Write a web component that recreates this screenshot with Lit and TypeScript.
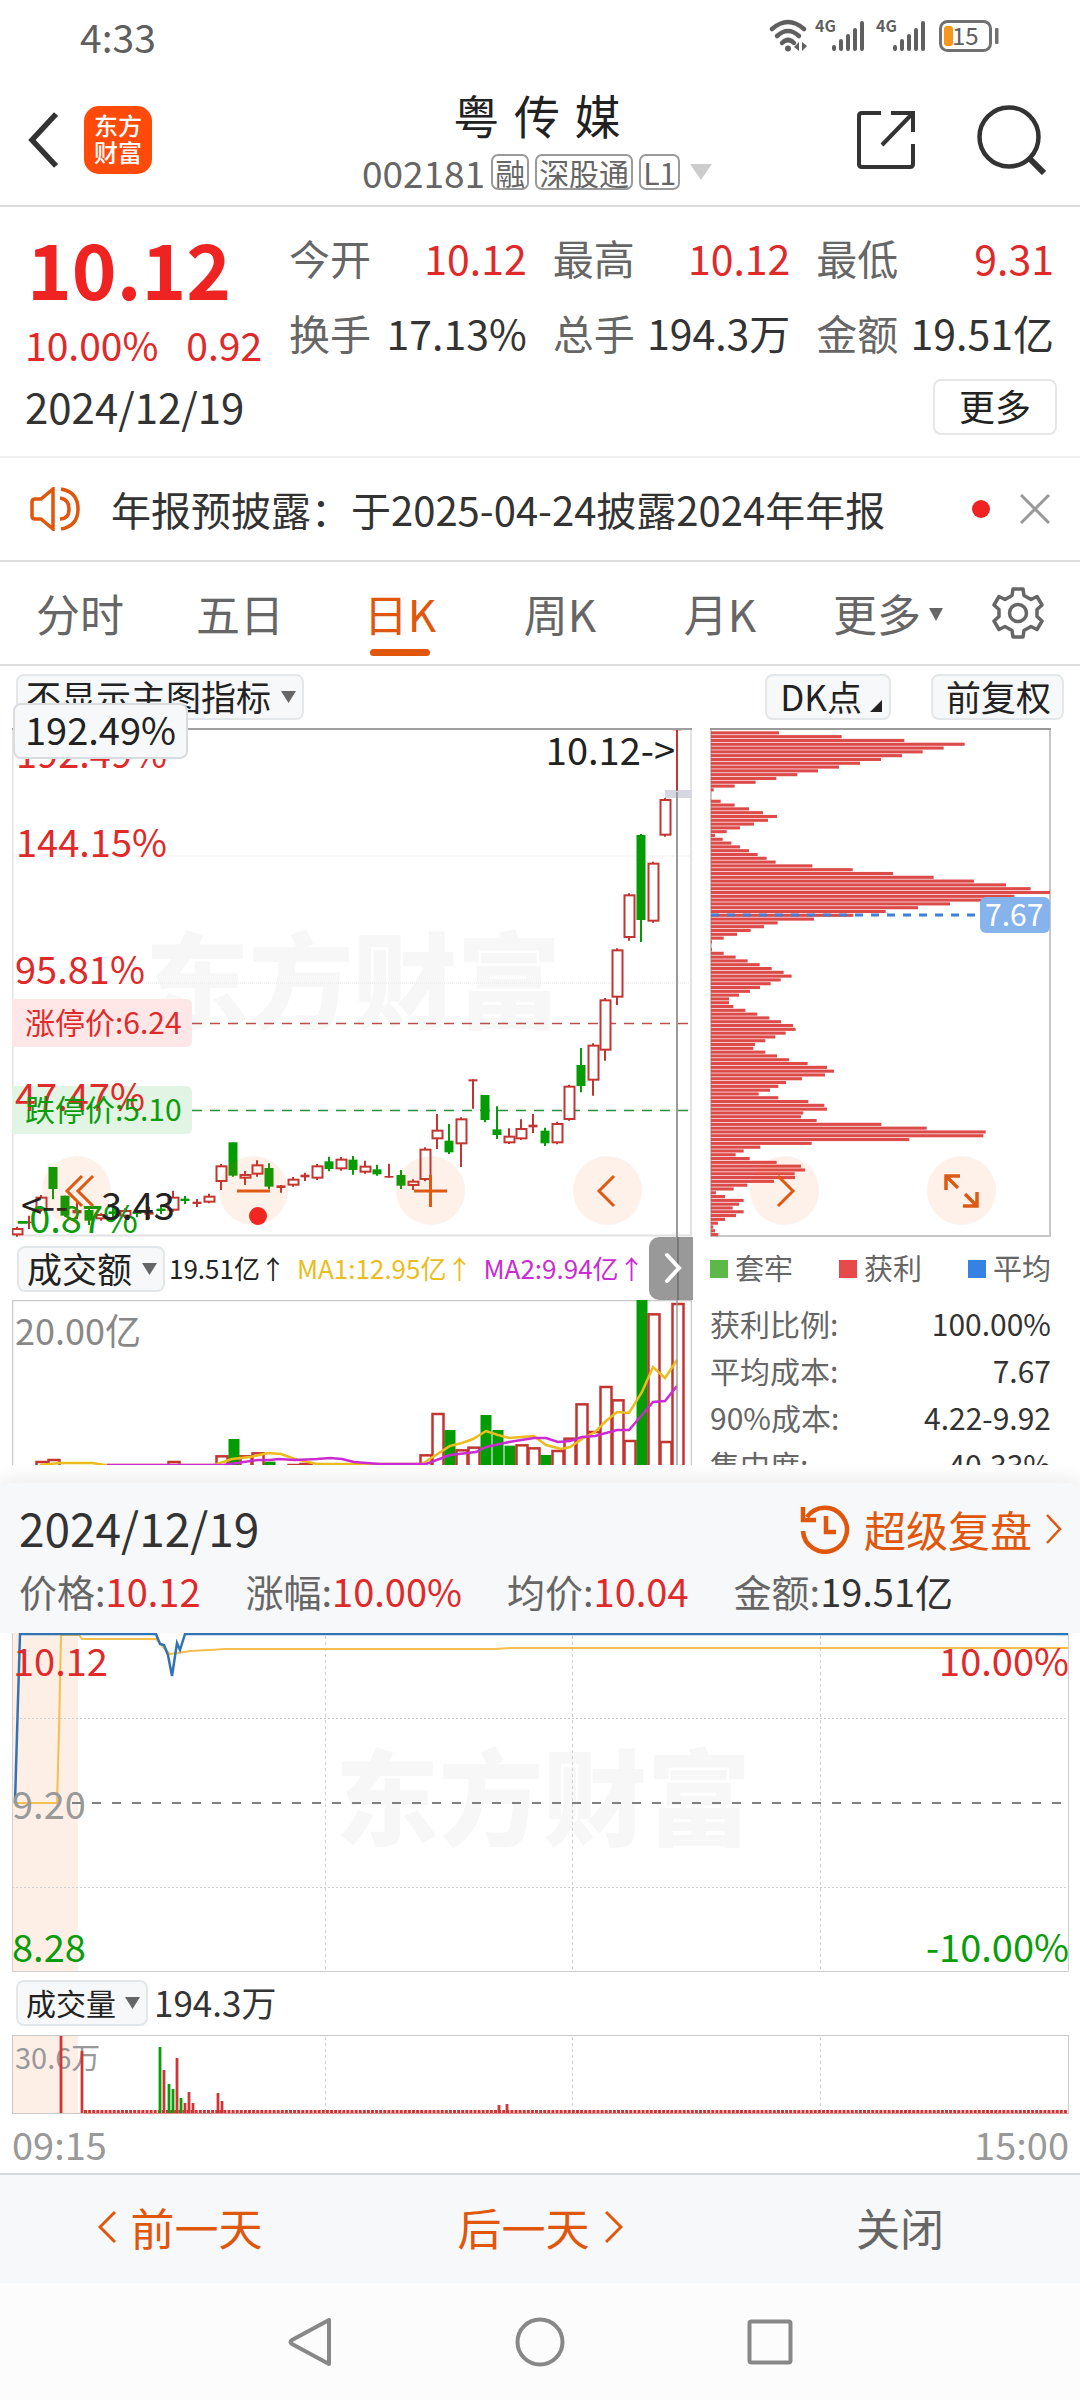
import { LitElement, html, svg, css } from "lit";
import { customElement, property, state } from "lit/decorators.js";
import { classMap } from "lit/directives/class-map.js";

const FONT = css`"Noto Sans CJK SC", "Noto Sans", sans-serif`;

/* ---------- chart data ---------- */

const RED = "#c23531";
const GREEN = "#049c04";

/** colour, high, body top, body bottom, low; thirds of a pixel below CHART_TOP */
type Candle = ["r" | "g", number, number, number, number];
const CHART_TOP = 720;
const STEP = 12;
const FIRST_X = 17;

const CANDLES: Candle[] = [
  ["r", 1520, 1524, 1546, 1550], ["r", 1487, 1505, 1509, 1527], ["r", 1425, 1430, 1472, 1475],
  ["g", 1341, 1341, 1407, 1438], ["g", 1427, 1427, 1487, 1490], ["r", 1445, 1470, 1480, 1498],
  ["g", 1465, 1470, 1502, 1515], ["r", 1480, 1482, 1498, 1502], ["g", 1450, 1474, 1482, 1500],
  ["r", 1465, 1470, 1490, 1495], ["g", 1466, 1475, 1482, 1492], ["r", 1460, 1476, 1484, 1498],
  ["g", 1455, 1466, 1473, 1482], ["r", 1412, 1430, 1472, 1475], ["g", 1428, 1436, 1443, 1452],
  ["r", 1437, 1445, 1452, 1461], ["r", 1421, 1427, 1448, 1450], ["r", 1332, 1336, 1386, 1410],
  ["g", 1267, 1267, 1367, 1370], ["r", 1353, 1362, 1376, 1395], ["r", 1321, 1333, 1364, 1370],
  ["g", 1330, 1344, 1400, 1408], ["r", 1395, 1396, 1404, 1418], ["r", 1371, 1376, 1397, 1400],
  ["r", 1358, 1364, 1372, 1383], ["r", 1332, 1336, 1376, 1380], ["g", 1310, 1324, 1347, 1354],
  ["r", 1311, 1316, 1348, 1352], ["g", 1308, 1319, 1350, 1364], ["r", 1322, 1337, 1358, 1361],
  ["g", 1334, 1348, 1363, 1367], ["r", 1331, 1368, 1373, 1373], ["g", 1350, 1365, 1397, 1407],
  ["r", 1378, 1382, 1398, 1410], ["r", 1282, 1286, 1380, 1384], ["r", 1182, 1229, 1258, 1287],
  ["g", 1212, 1262, 1297, 1302], ["r", 1192, 1195, 1273, 1341], ["r", 1078, 1078, 1084, 1166],
  ["g", 1125, 1125, 1200, 1207], ["g", 1159, 1228, 1245, 1257], ["r", 1225, 1247, 1270, 1272],
  ["r", 1198, 1224, 1258, 1260], ["r", 1182, 1214, 1222, 1239], ["g", 1223, 1232, 1270, 1278],
  ["r", 1205, 1209, 1270, 1273], ["r", 1094, 1097, 1200, 1202], ["g", 984, 1035, 1098, 1117],
  ["r", 970, 974, 1082, 1127], ["r", 834, 838, 992, 1022], ["r", 685, 688, 833, 855],
  ["r", 520, 523, 654, 662], ["g", 342, 345, 600, 666], ["r", 425, 428, 605, 608],
  ["r", 234, 237, 347, 350], ["r", 26, 26, 31, 212],
];

/** right edges of the cost distribution bars, top price first */
const CHIPS = [
  267, 455, 643, 824, 761, 698, 636, 573, 510, 447, 384, 322, 259, 197, 134, 71, 0, 0,
  92, 134, 177, 219, 261, 234, 192, 150, 110, 75, 98, 124, 150, 177, 203, 230, 257,
  367, 488, 609, 731, 852, 948, 1022, 1080, 973, 900, 780, 684, 587, 490, 372, 263, 222,
  182, 141, 101, 66, 0, 66, 101, 137, 173, 209, 245, 281, 305, 272, 242, 210, 180, 147,
  117, 117, 130, 166, 202, 238, 273, 309, 317, 287, 256, 226, 195, 190, 226, 261, 297,
  353, 411, 432, 405, 336, 288, 265, 240, 206, 265, 355, 403, 411, 340, 333, 380, 574,
  710, 887, 880, 658, 365, 211, 161, 137, 179, 260, 333, 345, 314, 315, 252, 172, 131,
  78, 105, 161, 147, 128, 161, 138, 105, 84, 70, 75, 85,
];

/** day index, colour, bar top in thirds of a pixel */
const VOLUMES: [number, "r" | "g", number][] = [
  [2, "r", 693], [3, "r", 687], [13, "r", 693], [17, "r", 676], [18, "g", 627], [19, "r", 676],
  [20, "r", 667], [21, "g", 695], [23, "r", 702], [24, "r", 699], [34, "r", 673], [35, "r", 549],
  [36, "g", 600], [37, "r", 658], [38, "r", 650], [39, "g", 555], [40, "g", 600], [41, "g", 647],
  [42, "r", 643], [43, "r", 652], [44, "g", 675], [45, "r", 660], [46, "r", 623], [47, "r", 520],
  [48, "r", 603], [49, "r", 468], [50, "r", 508], [51, "r", 630], [52, "g", 210], [53, "r", 250],
  [54, "r", 633], [55, "r", 219],
];

const MA1 = "40,1465 60,1463 92,1463 105,1465 180,1465 214,1465 232,1459 250,1457 268,1453 281,1454 295,1459 317,1464 348,1464 375,1464 422,1464 450,1446 462,1443 473,1439 486,1431 498,1435 509,1438 534,1436 546,1445 561,1449 570,1447 582,1439 595,1432 606,1421 617,1412 629,1413 642,1392 653,1367 665,1378 677,1360";
const MA2 = "107,1465 163,1465 223,1465 258,1460 270,1460 279,1459 295,1460 317,1459 330,1458 342,1459 354,1462 380,1464 426,1464 450,1455 476,1452 486,1447 509,1442 534,1438 546,1438 558,1442 570,1441 582,1437 595,1436 617,1430 629,1430 642,1415 653,1402 665,1401 677,1386";

const MINUTE_BARS: [number, "r" | "g", number][] = [
  [61, "r", 2036], [82, "r", 2051], [160, "g", 2047], [164, "r", 2070], [169, "g", 2084],
  [173, "g", 2089], [177, "r", 2058], [181, "g", 2098], [185, "r", 2103], [189, "r", 2092],
  [193, "r", 2103], [218, "r", 2093], [222, "r", 2101], [499, "r", 2105], [507, "r", 2104],
];

/* ---------- small pieces ---------- */

@customElement("pick-list")
class PickList extends LitElement {
  @property() label = "";
  @property({ type: Array }) options: string[] = [];

  static styles = css`
    :host {
      display: inline-grid;
      align-items: center;
      font-size: inherit;
    }
    .box {
      grid-area: 1 / 1;
      appearance: none;
      box-sizing: border-box;
      height: 46px;
      margin: 0;
      padding: 0 30px 2px 8px;
      border: 2px solid #e4e7ea;
      border-radius: 8px;
      background: #f7f8fa;
      color: #222;
      font-family: ${FONT};
      font-size: inherit;
      line-height: 40px;
    }
    .arrow {
      grid-area: 1 / 1;
      justify-self: end;
      margin-right: 8px;
      pointer-events: none;
    }
  `;

  render() {
    return html`
      <select class="box" aria-label=${this.label}>
        ${this.options.map((o) => html`<option>${o}</option>`)}
      </select>
      <svg class="arrow" width="15" height="14" viewBox="0 0 15 14" aria-hidden="true">
        <path d="M0 1H15L7.500 13Z" fill="#666" />
      </svg>
    `;
  }
}

@customElement("status-bar")
class StatusBar extends LitElement {
  static styles = css`
    :host {
      display: flex;
      justify-content: space-between;
      align-items: center;
      height: 75px;
      padding: 0 80px;
      color: #5f5f5f;
      font-family: ${FONT};
      font-size: 39px;
      line-height: 40px;
    }
    .time {
      padding-bottom: 4px;
    }
  `;

  private signal(x: number) {
    return svg`
      <text x=${x} y="24" font-size="16" font-weight="700" fill="#5f5f5f">4G</text>
      ${[0, 1, 2, 3, 4].map((i) => {
        const h = [6, 12, 17, 23, 30][i];
        return svg`<rect x=${x + 17 + i * 7} y=${43 - h} width="4" height=${h} rx="2" fill="#5f5f5f" />`;
      })}
    `;
  }

  render() {
    return html`
      <span class="time">4:33</span>
      <svg width="232" height="50" viewBox="768 8 232 50" role="img" aria-label="网络与电量">
        <g transform="translate(0 3)">
          <g fill="none" stroke="#5f5f5f" stroke-width="4.500" stroke-linecap="round">
            <path d="M772 21Q788 7 804 21" />
            <path d="M777 28Q788 18 799 28" />
            <path d="M782 35Q788 29 794 35" />
          </g>
          <circle cx="788" cy="40.500" r="3" fill="#5f5f5f" />
          <path d="M799 34v9l-5-4zM802 43v-9l5 4z" fill="#5f5f5f" />
          ${this.signal(815)} ${this.signal(876)}
          <rect x="940.500" y="13.500" width="50" height="29" rx="7" fill="none" stroke="#707070" stroke-width="3" />
          <rect x="995" y="20" width="3.500" height="16" rx="1" fill="#707070" />
          <rect x="944" y="18" width="9" height="20" rx="3" fill="#f7971d" />
          <text x="952" y="37" font-size="24" fill="#5f5f5f">15</text>
        </g>
      </svg>
    `;
  }
}

/* ---------- page ---------- */

@customElement("app-root")
class AppRoot extends LitElement {
  @state() private tab = "日K";

  static styles = css`
    :host {
      display: block;
      min-height: 100vh;
      background: #fff;
      color: #333;
      font-family: ${FONT};
      font-size: 40px;
    }
    * {
      box-sizing: border-box;
    }
    button,
    a {
      margin: 0;
      padding: 0;
      border: 0;
      background: none;
      color: inherit;
      font: inherit;
      text-decoration: none;
    }
    svg {
      display: block;
    }
    dl,
    dd,
    dt,
    h1,
    p {
      margin: 0;
      font-weight: 400;
    }
    .red {
      color: #e02a2a;
    }

    .header {
      display: grid;
      grid-template-columns: 1fr auto 1fr;
      align-items: center;
      height: 132px;
      padding: 0 34px 0 28px;
      border-bottom: 2px solid #dcdcdc;
    }
    .side {
      display: flex;
      align-items: center;
      gap: 26px;
    }
    .side.end {
      justify-content: flex-end;
      gap: 60px;
    }
    .logo {
      display: grid;
      place-content: center;
      width: 68px;
      height: 68px;
      padding-bottom: 4px;
      border-radius: 15px;
      background: #ff4a0a;
      color: #fff;
      font-size: 24px;
      font-weight: 500;
      line-height: 27px;
    }
    .title {
      display: flex;
      flex-direction: column;
      align-items: center;
      gap: 4px;
      padding-top: 4px;
    }
    .name {
      color: #222;
      font-family: "DejaVu Sans", "Noto Sans CJK SC", sans-serif;
      font-size: 46px;
      line-height: 56px;
    }
    .code {
      display: flex;
      align-items: center;
      gap: 6px;
      color: #666;
      font-size: 37px;
      line-height: 44px;
    }
    .badge {
      padding: 0 2px;
      border: 2px solid #9a9a9a;
      border-radius: 7px;
      font-size: 30px;
      line-height: 32px;
    }
    .more-arrow {
      margin-left: 4px;
    }

    .quote {
      display: grid;
      grid-template-columns: 264px 1fr;
      padding: 13px 26px 12px 25px;
      border-bottom: 2px solid #efefef;
    }
    .price {
      color: #f02323;
      font-size: 76px;
      font-weight: 700;
      line-height: 94px;
      padding: 0 0 4px 2px;
    }
    .change {
      display: flex;
      gap: 28px;
      font-size: 39px;
      line-height: 52px;
    }
    .stats {
      display: grid;
      grid-template-columns: repeat(3, 1fr);
      column-gap: 26px;
      font-size: 41px;
      line-height: 75px;
    }
    .stat {
      display: flex;
      justify-content: space-between;
      white-space: nowrap;
    }
    .stat dt,
    .grey {
      color: #666;
    }
    .date-row {
      grid-column: 1 / -1;
      display: flex;
      justify-content: space-between;
      align-items: center;
      height: 74px;
      font-size: 42px;
      line-height: 50px;
    }
    .date-row time {
      padding-bottom: 2px;
    }
    .more {
      margin-right: -3px;
      padding: 0 24px 4px;
      border: 2px solid #e6e6e6;
      border-radius: 8px;
      color: #222;
      font-size: 36px;
      line-height: 48px;
    }

    .notice {
      display: flex;
      align-items: center;
      height: 104px;
      padding: 0 30px;
      border-bottom: 2px solid #dcdcdc;
      font-size: 40px;
      line-height: 50px;
    }
    .notice p {
      flex: 1;
      margin-left: 31px;
      white-space: nowrap;
    }
    .dot {
      width: 18px;
      height: 18px;
      margin-right: 30px;
      border-radius: 50%;
      background: #f02323;
    }

    .tabs {
      display: grid;
      grid-template-columns: repeat(5, 160fr) 176fr 84fr;
      height: 104px;
      padding-right: 20px;
      border-bottom: 2px solid #dcdcdc;
      color: #666;
      font-size: 44px;
      line-height: 52px;
    }
    .tab {
      display: flex;
      flex-direction: column;
      align-items: center;
      padding-top: 25px;
    }
    .tab.wide {
      flex-direction: row;
      align-items: flex-start;
      justify-content: center;
      gap: 8px;
    }
    .tab.wide svg {
      margin-top: 21px;
    }
    .tab.on {
      color: #e0560b;
    }
    .tab.on::after {
      content: "";
      width: 60px;
      height: 7px;
      margin-top: 10px;
      border-radius: 4px;
      background: #e0560b;
    }
    .gear {
      display: grid;
      place-content: center;
    }

    .tools {
      display: flex;
      align-items: flex-start;
      gap: 40px;
      height: 62px;
      padding: 8px 16px 0;
      font-size: 35px;
      line-height: 40px;
    }
    .tools pick-list {
      margin-right: auto;
    }
    .tool {
      display: flex;
      align-items: center;
      height: 46px;
      padding: 0 11px 3px 13px;
      border: 2px solid #e4e7ea;
      border-radius: 8px;
      background: #f7f8fa;
      color: #222;
    }
    .tool svg {
      margin: 20px -4px 0 8px;
    }

    .charts {
      position: relative;
      display: grid;
      grid-template-columns: minmax(0, 680fr) minmax(0, 341fr);
      column-gap: 18px;
      padding: 0 29px 0 12px;
    }
    .charts svg.plot {
      width: 100%;
      height: auto;
    }
    .kline {
      grid-area: 1 / 1;
    }
    .chips {
      grid-area: 1 / 2;
    }
    .tip {
      position: absolute;
      top: -25px;
      left: 13px;
      padding: 0 10px 4px;
      border: 2px solid #d9dcdf;
      border-radius: 8px;
      background: #f7f8fa;
      color: #222;
      font-size: 38px;
      line-height: 48px;
    }
    .float {
      grid-area: 1 / 1 / 2 / 3;
      align-self: end;
      display: flex;
      justify-content: space-between;
      margin: 0 55px 12px 30px;
    }
    .round {
      display: grid;
      place-content: center;
      width: 69px;
      height: 69px;
      border-radius: 50%;
      background: rgba(240, 90, 10, 0.085);
    }
    .indicator {
      display: flex;
      align-items: center;
      gap: 4px;
      height: 63px;
      padding-left: 5px;
      font-size: 35px;
      line-height: 40px;
      white-space: nowrap;
    }
    .readings {
      display: flex;
      flex: 1;
      gap: 11px;
      padding-bottom: 2px;
      color: #222;
      font-size: 26px;
    }
    .yellow {
      color: #ebbd1c;
    }
    .purple {
      color: #ca2bd2;
    }
    .expand {
      align-self: stretch;
      width: 44px;
      border-radius: 10px 0 0 10px;
      background: #999;
    }
    .legend {
      display: flex;
      justify-content: space-between;
      align-items: center;
      padding-bottom: 3px;
      color: #666;
      font-size: 29px;
      line-height: 40px;
    }
    .key {
      display: flex;
      align-items: center;
      gap: 7px;
    }
    .key::before {
      content: "";
      width: 18px;
      height: 18px;
      margin-top: 3px;
      background: var(--swatch);
    }
    .key.g {
      --swatch: #5cb947;
    }
    .key.r {
      --swatch: #e64a4a;
    }
    .key.b {
      --swatch: #3582e3;
    }
    .costs {
      height: 165px;
      overflow: hidden;
      font-size: 30px;
      line-height: 47px;
    }

    .panel-head {
      background: #f7f8fa;
      margin-top: 18px;
      padding: 16px 18px 7px 19px;
      border-radius: 10px 10px 0 0;
      box-shadow: 0 -6px 16px rgba(0, 0, 0, 0.07);
    }
    .row {
      display: flex;
      justify-content: space-between;
      align-items: center;
    }
    .panel-date {
      font-size: 46px;
      line-height: 56px;
      padding-bottom: 4px;
    }
    .replay {
      display: flex;
      align-items: center;
      gap: 14px;
      color: #e0560b;
      font-size: 42px;
      line-height: 56px;
    }
    .figures {
      display: flex;
      gap: 45px;
      padding-bottom: 3px;
      font-size: 38px;
      line-height: 64px;
    }
    .minute {
      display: block;
      padding: 0 11px 0 12px;
    }
    .minute svg.plot {
      width: 100%;
      height: auto;
    }
    .vol-row {
      display: flex;
      align-items: center;
      gap: 6px;
      height: 62px;
      padding-left: 4px;
      font-size: 30px;
      line-height: 40px;
    }
    .vol-row output {
      padding-bottom: 3px;
      font-size: 35px;
    }
    .times {
      height: 59px;
      color: #999;
      font-size: 38px;
      line-height: 56px;
    }

    .footer {
      display: grid;
      grid-template-columns: repeat(3, 1fr);
      height: 110px;
      border-top: 2px solid #d5d9dd;
      background: #f7f8fa;
      color: #666;
      font-size: 44px;
      line-height: 56px;
    }
    .footer button {
      display: flex;
      align-items: center;
      justify-content: center;
      gap: 15px;
      padding-bottom: 4px;
    }
    .footer .go {
      color: #e0560b;
    }
    .system {
      display: flex;
      justify-content: center;
      align-items: center;
      gap: 182px;
      height: 117px;
      background: #fcfcfc;
    }
  `;

  private candle([c, hi, top, bot, lo]: Candle, i: number) {
    const x = FIRST_X + STEP * i;
    const y = (v: number) => CHART_TOP + v / 3;
    const col = c === "r" ? RED : GREEN;
    const flat = bot - top < 11;
    const body =
      c === "g" || flat
        ? svg`<rect x=${x - 4.5} y=${y(top)} width="9" height=${(bot - top) / 3} fill=${col} />`
        : svg`<rect x=${x - 4.5} y=${y(top) + 1} width="10" height=${(bot - top) / 3 - 2} fill="#fff" stroke=${col} stroke-width="2" />`;
    return svg`<path d="M${x} ${y(hi)}V${y(lo)}" stroke=${col} stroke-width="2" />${body}`;
  }

  private renderKline() {
    return html`
      <svg class="plot kline" viewBox="12 728 680 509" role="img" aria-label="日K线图">
        <g font-weight="900" font-size="104" fill="#f7f7f7">
          <text x="145" y="1021">东方财富</text>
        </g>
        <path d="M12 856H692M12 983H692M12 1110H692" stroke="#e6e6e6" stroke-dasharray="1 1" />
        <path d="M12.500 728V1236M691 728V1236M12 1235.500H692" fill="none" stroke="#e2e2e2" stroke-width="2" />
        <path d="M12 999H186Q192 999 192 1005V1041Q192 1047 186 1047H12Z" fill="#ffe7e7" />
        <path d="M12 1086H186Q192 1086 192 1092V1128Q192 1134 186 1134H12Z" fill="#e2f4e4" />
        <path d="M192 1023.500H690" stroke="#b8504e" stroke-width="1.500" stroke-dasharray="10 8" />
        <path d="M192 1110.500H690" stroke="#2f8f3d" stroke-width="1.500" stroke-dasharray="10 8" />
        <g font-size="38" fill="#e02a2a">
          <text x="16" y="768">192.49%</text>
          <text x="16" y="857">144.15%</text>
          <text x="15" y="984">95.81%</text>
          <text x="15" y="1111">47.47%</text>
        </g>
        <g font-size="30">
          <text x="25" y="1034" fill="#e02a2a">涨停价:6.24</text>
          <text x="25" y="1121" fill="#0a9c0a">跌停价:5.10</text>
        </g>
        <rect x="665" y="790" width="27" height="8" fill="#d5d8de" />
        ${CANDLES.map((c, i) => this.candle(c, i))}
        <text x="16" y="1233" font-size="38" fill="#0a9c0a">-0.87%</text>
        <g font-size="38" fill="#222">
          <text x="21" y="1220">&lt;--</text>
          <text x="101" y="1220">3.43</text>
          <text x="675" y="765" text-anchor="end">10.12-&gt;</text>
        </g>
        <circle cx="258" cy="1216" r="9" fill="#f02323" />
        <path d="M677 792V1237" stroke="#9a9a9a" stroke-width="2" />
        <path d="M12 729H692" stroke="#a0a0a0" stroke-width="2" />
      </svg>
    `;
  }

  private renderChips() {
    return html`
      <svg class="plot chips" viewBox="710 728 341 509" role="img" aria-label="筹码分布">
        <rect x="711" y="729" width="339" height="507" fill="none" stroke="#c6c6c6" stroke-width="2" />
        ${CHIPS.map((w, i) =>
          w > 0
            ? svg`<rect x="711" y=${731.3 + i * 3.801} width=${(w - 63) / 3} height="3.100" fill="#dd4a4a" />`
            : null
        )}
        <path d="M711 915H975" stroke="#3f80d4" stroke-width="3" stroke-dasharray="8 8" />
        <rect x="980" y="897" width="70" height="36" rx="6" fill="#86b3ec" />
        <text x="985" y="926" font-size="30" fill="#fff">7.67</text>
        <path d="M710 729H1051" stroke="#9a9a9a" stroke-width="2" />
      </svg>
    `;
  }

  private renderVolume() {
    return html`
      <svg class="plot" viewBox="12 1300 680 165" role="img" aria-label="成交额图">
        <path d="M12.500 1465V1300.500H691.500V1465" fill="none" stroke="#c9c9c9" stroke-width="1.500" />
        <text x="15" y="1345" font-size="36" fill="#888">20.00亿</text>
        ${VOLUMES.map(([i, c, v]) => {
          const x = FIRST_X + STEP * i;
          const y = 1230 + v / 3;
          return c === "g"
            ? svg`<rect x=${x - 4.5} y=${y} width="11" height=${1466 - y} fill=${GREEN} />`
            : svg`<rect x=${x - 4.5} y=${y + 1} width="11" height=${1470 - y} fill="#fff" stroke=${RED} stroke-width="2.500" />`;
        })}
        <polyline points=${MA1} fill="none" stroke="#ebbd1c" stroke-width="2.500" />
        <polyline points=${MA2} fill="none" stroke="#ca2bd2" stroke-width="2.500" />
        <path d="M677 1300V1465" stroke="#9a9a9a" stroke-width="2" opacity="0.700" />
      </svg>
    `;
  }

  private renderMinute() {
    return html`
      <svg class="plot" viewBox="12 1633 1057 339" role="img" aria-label="分时走势">
        <rect x="13" y="1633" width="65" height="338" fill="#fdeee6" />
        <text x="335" y="1838" font-size="104" font-weight="900" fill="#f7f7f7">东方财富</text>
        <g stroke="#cfcfcf" fill="none">
          <path d="M12 1718.500H1069M12 1887.500H1069" stroke-dasharray="2 2" />
          <path d="M325.500 1636V1971M572.500 1636V1971M820.500 1636V1971" stroke-dasharray="3 3" />
          <path d="M12.500 1633V1971.500H1068.500V1633" />
        </g>
        <path d="M72 1803H1066" stroke="#808080" stroke-width="2" stroke-dasharray="9 11" />
        <polyline points="15,1803 57,1803 59,1730 61,1635 79,1635 82,1639 156,1639 163,1647 170,1654 178,1653 190,1651 210,1650 225,1649 495,1649 510,1648 1068,1648" fill="none" stroke="#f4bf4f" stroke-width="2" />
        <polyline points="15,1803 18,1700 20,1634 156,1634 160,1644 164,1645 168,1655 172,1676 177,1643 180,1650 185,1634 1068,1634" fill="none" stroke="#3273b4" stroke-width="2.500" />
        <g font-size="38">
          <text x="13" y="1676" fill="#e02a2a">10.12</text>
          <text x="1069" y="1676" fill="#e02a2a" text-anchor="end">10.00%</text>
          <text x="12" y="1819" fill="#999">9.20</text>
          <text x="12" y="1962" fill="#0a9c0a">8.28</text>
          <text x="1069" y="1962" fill="#0a9c0a" text-anchor="end">-10.00%</text>
        </g>
      </svg>
    `;
  }

  private renderMinuteVolume() {
    return html`
      <svg class="plot" viewBox="12 2034 1057 80" role="img" aria-label="分时成交量">
        <rect x="13" y="2035" width="65" height="78" fill="#fdeee6" />
        <path d="M325.500 2037V2113M572.500 2037V2113M820.500 2037V2113" stroke="#cfcfcf" stroke-dasharray="3 3" />
        <text x="15" y="2069" font-size="29" fill="#999">30.6万</text>
        <rect x="12.500" y="2035.500" width="1056" height="78" fill="none" stroke="#c9c9c9" />
        <path d="M84 2111.500H1068" stroke="#cf3535" stroke-width="3" stroke-dasharray="3 1.100" />
        <path d="M84 2113.500H1068" stroke="#e28f8f" />
        ${MINUTE_BARS.map(
          ([x, c, y]) => svg`<path d="M${x} ${y}V2113" stroke=${c === "r" ? "#cf3535" : "#0a9c0a"} stroke-width="2.800" />`
        )}
      </svg>
    `;
  }

  private readonly rounds: [string, unknown][] = [
    ["最早", svg`<path d="M24 3L9 18L24 33M35 3L20 18L35 33" />`],
    ["缩小", svg`<path d="M2 18H35" />`],
    ["放大", svg`<path d="M2 18H35M18.500 2V34" />`],
    ["左移", svg`<path d="M25 3L10 18L25 33" />`],
    ["右移", svg`<path d="M12 3L27 18L12 33" />`],
    ["全屏", svg`<path d="M3 17V3H17M4 4L15 15M20 33H34V19M33 32L22 21" stroke-width="3.500" />`],
  ];

  private readonly stats: [string, string, boolean][] = [
    ["今开", "10.12", true], ["最高", "10.12", true], ["最低", "9.31", true],
    ["换手", "17.13%", false], ["总手", "194.3万", false], ["金额", "19.51亿", false],
  ];

  render() {
    return html`
      <status-bar></status-bar>

      <header class="header">
        <div class="side">
          <button aria-label="返回">
            <svg width="30" height="56" viewBox="0 0 30 56"><path d="M28 2L4 28L28 54" fill="none" stroke="#333" stroke-width="5.500" /></svg>
          </button>
          <a class="logo" href="#home"><span>东方</span><span>财富</span></a>
        </div>
        <div class="title">
          <h1 class="name">粤 传 媒</h1>
          <div class="code">
            <span>002181</span>
            <span class="badge">融</span><span class="badge">深股通</span><span class="badge">L1</span>
            <svg class="more-arrow" width="22" height="16" viewBox="0 0 22 16"><path d="M0 0H22L11 16Z" fill="#ccc" /></svg>
          </div>
        </div>
        <div class="side end">
          <button aria-label="分享">
            <svg width="60" height="60" viewBox="0 0 60 60" fill="none" stroke="#333" stroke-width="4">
              <path d="M25 3H6Q3 3 3 6V54Q3 57 6 57H54Q57 57 57 54V34M35 3H57V22M57 3L26 35" />
            </svg>
          </button>
          <button aria-label="搜索">
            <svg width="70" height="70" viewBox="0 0 70 70" fill="none" stroke="#333" stroke-width="4.500">
              <circle cx="33" cy="32" r="29.500" /><path d="M53 53L68 68" stroke-width="6" />
            </svg>
          </button>
        </div>
      </header>

      <section class="quote">
        <div>
          <div class="price">10.12</div>
          <div class="change red"><span>10.00%</span><span>0.92</span></div>
        </div>
        <dl class="stats">
          ${this.stats.map(
            ([k, v, red]) => html`<div class="stat"><dt>${k}</dt><dd class=${classMap({ red })}>${v}</dd></div>`
          )}
        </dl>
        <div class="date-row"><time>2024/12/19</time><button class="more">更多</button></div>
      </section>

      <section class="notice">
        <svg width="50" height="44" viewBox="0 0 50 44" fill="none" stroke="#e0560b" stroke-width="3.500">
          <path d="M23 2L11 12H5Q2 12 2 15V29Q2 32 5 32H11L23 42Z" />
          <path d="M30 11Q39 12 39 22T30 32M31 2Q48 5 48 22T31 42" />
        </svg>
        <p>年报预披露：于2025-04-24披露2024年年报</p>
        <span class="dot"></span>
        <button aria-label="关闭公告">
          <svg width="30" height="30" viewBox="0 0 30 30"><path d="M1 1L29 29M29 1L1 29" stroke="#999" stroke-width="3" /></svg>
        </button>
      </section>

      <nav class="tabs">
        ${["分时", "五日", "日K", "周K", "月K"].map(
          (t) => html`<button class=${classMap({ tab: true, on: t === this.tab })} @click=${() => (this.tab = t)}>${t}</button>`
        )}
        <button class="tab wide">更多<svg width="14" height="13" viewBox="0 0 14 13"><path d="M0 0H14L7 13Z" fill="#666" /></svg></button>
        <button class="gear" aria-label="设置">
          <svg width="52" height="52" viewBox="0 0 52 52" fill="none" stroke="#666" stroke-width="3.500" stroke-linejoin="round">
            <path d="M21 2H31L32 8.500L39 12.500L45 9.500L50 18L45 22.500V29.500L50 34L45 42.500L39 39.500L32 43.500L31 50H21L20 43.500L13 39.500L7 42.500L2 34L7 29.500V22.500L2 18L7 9.500L13 12.500L20 8.500Z" />
            <circle cx="26" cy="26" r="8.500" />
          </svg>
        </button>
      </nav>

      <div class="tools">
        <pick-list label="主图指标" .options=${["不显示主图指标"]}></pick-list>
        <button class="tool">DK点<svg width="12" height="12" viewBox="0 0 12 12"><path d="M12 0V12H0Z" fill="#222" /></svg></button>
        <button class="tool">前复权</button>
      </div>

      <section class="charts">
        ${this.renderKline()} ${this.renderChips()}
        <div class="tip">192.49%</div>
        <div class="float">
          ${this.rounds.map(
            ([name, shape]) => html`
              <button class="round" aria-label=${name}>
                <svg width="37" height="36" viewBox="0 0 37 36" fill="none" stroke="#dc5a14" stroke-width="3">${shape}</svg>
              </button>
            `
          )}
        </div>
        <div class="indicator">
          <pick-list label="副图指标" .options=${["成交额"]}></pick-list>
          <div class="readings">
            <span>19.51亿↑</span><span class="yellow">MA1:12.95亿↑</span><span class="purple">MA2:9.94亿↑</span>
          </div>
          <button class="expand" aria-label="展开">
            <svg width="44" height="63" viewBox="0 0 44 63" fill="none">
              <path d="M29 0V63" stroke="#777" stroke-width="2" /><path d="M18 18L30 31L18 44" stroke="#fff" stroke-width="4" stroke-linecap="round" />
            </svg>
          </button>
        </div>
        <div class="legend">
          <span class="key g">套牢</span><span class="key r">获利</span><span class="key b">平均</span>
        </div>
        ${this.renderVolume()}
        <dl class="costs">
          ${[["获利比例:", "100.00%"], ["平均成本:", "7.67"], ["90%成本:", "4.22-9.92"], ["集中度:", "40.33%"]].map(
            ([k, v]) => html`<div class="stat"><dt>${k}</dt><dd>${v}</dd></div>`
          )}
        </dl>
      </section>

      <section>
        <div class="panel-head">
          <div class="row">
            <time class="panel-date">2024/12/19</time>
            <a class="replay" href="#replay">
              <svg width="50" height="50" viewBox="0 0 50 50" fill="none" stroke="#e0560b" stroke-width="4.500">
                <path d="M7 13A22 22 0 1 1 3 27M3 3V16H16M26 12V28H36" />
              </svg>
              <span>超级复盘</span>
              <svg width="16" height="30" viewBox="0 0 16 30"><path d="M1 1L14 15L1 29" fill="none" stroke="#e0560b" stroke-width="2.500" /></svg>
            </a>
          </div>
          <div class="figures">
            <span><span class="grey">价格:</span><span class="red">10.12</span></span>
            <span><span class="grey">涨幅:</span><span class="red">10.00%</span></span>
            <span><span class="grey">均价:</span><span class="red">10.04</span></span>
            <span><span class="grey">金额:</span>19.51亿</span>
          </div>
        </div>
        <div class="minute">
          ${this.renderMinute()}
          <div class="vol-row">
            <pick-list label="分时指标" .options=${["成交量"]}></pick-list>
            <output>194.3万</output>
          </div>
          ${this.renderMinuteVolume()}
          <div class="times row"><span>09:15</span><span>15:00</span></div>
        </div>
      </section>

      <footer>
        <div class="footer">
          <button class="go">
            <svg width="18" height="32" viewBox="0 0 18 32"><path d="M17 1L2 16L17 31" fill="none" stroke="#e0560b" stroke-width="3" /></svg>前一天
          </button>
          <button class="go">
            后一天<svg width="18" height="32" viewBox="0 0 18 32"><path d="M1 1L16 16L1 31" fill="none" stroke="#e0560b" stroke-width="3" /></svg>
          </button>
          <button>关闭</button>
        </div>
        <nav class="system">
          <button aria-label="后退">
            <svg width="46" height="50" viewBox="0 0 46 50"><path d="M42 3V47L5 27Q2 25 5 23Z" fill="none" stroke="#888" stroke-width="4" stroke-linejoin="round" /></svg>
          </button>
          <button aria-label="主屏幕">
            <svg width="50" height="50" viewBox="0 0 50 50"><circle cx="25" cy="25" r="22.500" fill="none" stroke="#888" stroke-width="4" /></svg>
          </button>
          <button aria-label="最近任务">
            <svg width="46" height="46" viewBox="0 0 46 46"><rect x="2.500" y="2.500" width="41" height="41" rx="2" fill="none" stroke="#888" stroke-width="4" /></svg>
          </button>
        </nav>
      </footer>
    `;
  }
}
